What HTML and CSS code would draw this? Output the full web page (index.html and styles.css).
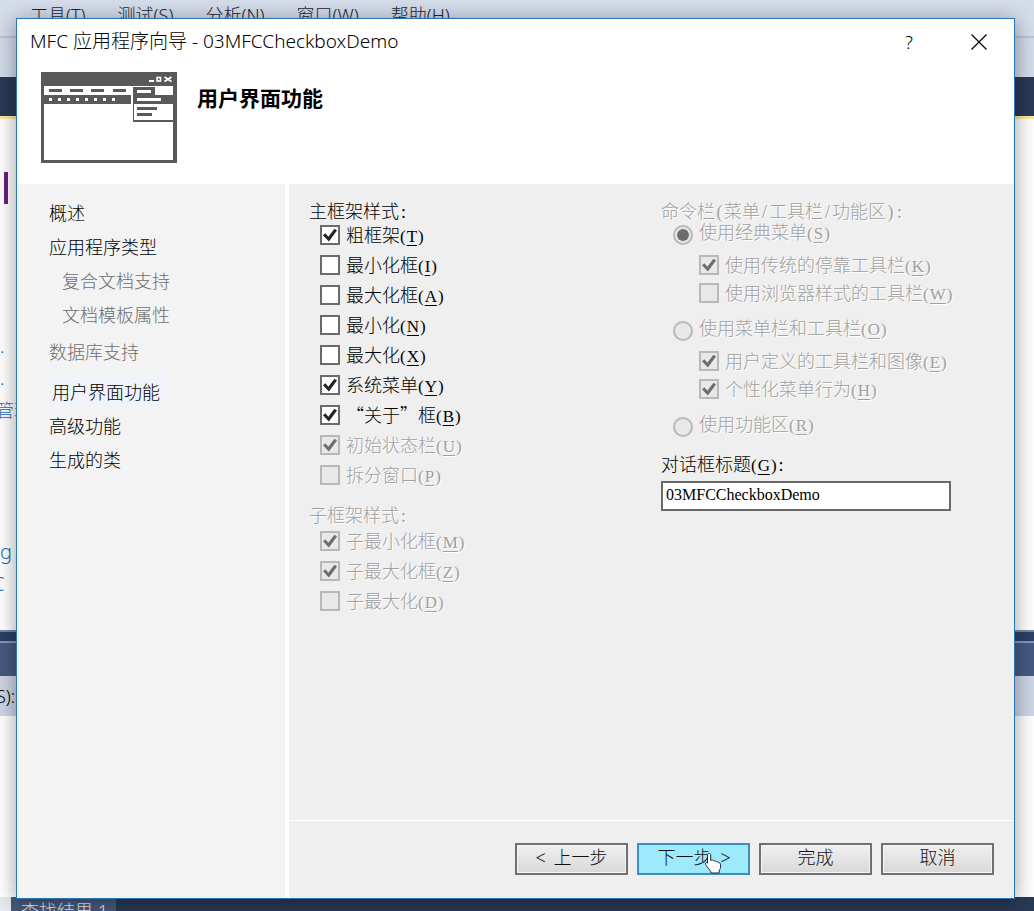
FILE: index.html
```html
<!DOCTYPE html>
<html lang="zh-CN">
  <head>
    <meta charset="utf-8">
    <title>MFC 应用程序向导</title>
    <link rel="stylesheet" href="styles.css">
  </head>

  <body>
  <!-- IDE behind the wizard -->
  <div class="ide">
    <div class="ide-menu">
      <span>工具(T)</span>
      <span>测试(S)</span>
      <span>分析(N)</span>
      <span>窗口(W)</span>
      <span>帮助(H)</span>
    </div>
    <div class="ide-toolbar"></div>
    <div class="ide-tabs"></div>
    <div class="ide-editor">
      <div class="caret"></div>
      <div class="ide-links">
        <span>.</span>
        <span>.</span>
        <span class="cut">管理</span>
      </div>
      <div class="ide-code">
        <span>g</span>
        <span class="cut">C</span>
      </div>
    </div>
    <div class="ide-splitter"></div>
    <div class="ide-panel-title"></div>
    <div class="ide-panel-bar"><span class="cut">S):</span></div>
    <div class="ide-panel"></div>
    <div class="ide-bottom"><span class="bottom-tab">查找结果 1</span></div>
  </div>

  <form class="dialog" onsubmit="return false">
    <div class="titlebar">
      <span class="title">MFC 应用程序向导 - 03MFCCheckboxDemo</span>
      <button type="button" class="caption help" aria-label="帮助">?</button>
      <button type="button" class="caption" aria-label="关闭">
        <svg width="16" height="16" viewBox="0 0 16 16"><path d="M.5 .5l15 15M15.5 .5l-15 15" stroke="#000" stroke-width="1.2"/></svg>
      </button>
    </div>

    <div class="header">
      <svg class="logo" width="136" height="91" viewBox="0 0 136 91">
        <rect width="136" height="91" fill="#58595b"/>
        <rect x="3" y="14" width="129" height="74" fill="#fff"/>
        <path d="M3 23h87v9H3z" fill="#58595b"/>
        <path d="M8 17h13v3H8zM29 17h13v3H29zM50 17h13v3H50zM72 17h13v3H72z" fill="#58595b"/>
        <path d="M8 26h3v3H8zM17 26h3v3h-3zM26 26h3v3h-3zM35 26h3v3h-3zM44 26h3v3h-3zM53 26h3v3h-3zM62 26h3v3h-3zM71 26h3v3h-3z" fill="#fff"/>
        <path d="M92 15h22v8h22v27H92z" fill="#58595b"/>
        <path d="M93 32h39v16H93z" fill="#fff"/>
        <path d="M96 18h14v3H96zM96 26h24v3H96zM108 8h5v2h-5z" fill="#fff"/>
        <path d="M96 35h20v3H96zM96 41h15v3H96z" fill="#58595b"/>
        <rect x="116" y="5.500" width="3.500" height="3.500" fill="none" stroke="#fff" stroke-width="1.600"/>
        <path d="M123.500 5l7 4.500M130.500 5l-7 4.500" stroke="#fff" stroke-width="2"/>
      </svg>
      <h1>用户界面功能</h1>
    </div>

    <div class="body">
      <ul class="steps">
        <li><a href="#">概述</a></li>
        <li><a href="#">应用程序类型</a></li>
        <li class="sub off">复合文档支持</li>
        <li class="sub off">文档模板属性</li>
        <li class="db off">数据库支持</li>
        <li><a href="#" class="current">用户界面功能</a></li>
        <li><a href="#">高级功能</a></li>
        <li><a href="#">生成的类</a></li>
      </ul>

      <div class="page">
        <div class="options">
          <div class="column">
            <fieldset>
              <legend>主框架样式<span class="half">:</span></legend>
              <label class="row"><input type="checkbox" checked><span>粗框架<span class="key">(<u>T</u>)</span></span></label>
              <label class="row"><input type="checkbox"><span>最小化框<span class="key">(<u>I</u>)</span></span></label>
              <label class="row"><input type="checkbox"><span>最大化框<span class="key">(<u>A</u>)</span></span></label>
              <label class="row"><input type="checkbox"><span>最小化<span class="key">(<u>N</u>)</span></span></label>
              <label class="row"><input type="checkbox"><span>最大化<span class="key">(<u>X</u>)</span></span></label>
              <label class="row"><input type="checkbox" checked><span>系统菜单<span class="key">(<u>Y</u>)</span></span></label>
              <label class="row"><input type="checkbox" checked><span>“关于”框<span class="key">(<u>B</u>)</span></span></label>
              <label class="row off"><input type="checkbox" checked disabled><span>初始状态栏<span class="key">(<u>U</u>)</span></span></label>
              <label class="row off"><input type="checkbox" disabled><span>拆分窗口<span class="key">(<u>P</u>)</span></span></label>
            </fieldset>
            <fieldset class="child off">
              <legend>子框架样式<span class="half">:</span></legend>
              <label class="row"><input type="checkbox" checked disabled><span>子最小化框<span class="key">(<u>M</u>)</span></span></label>
              <label class="row"><input type="checkbox" checked disabled><span>子最大化框<span class="key">(<u>Z</u>)</span></span></label>
              <label class="row"><input type="checkbox" disabled><span>子最大化<span class="key">(<u>D</u>)</span></span></label>
            </fieldset>
          </div>

          <div class="column">
            <fieldset class="off">
              <legend>命令栏<span class="half">(</span>菜单<span class="half">/</span>工具栏<span class="half">/</span>功能区<span class="half">)</span><span class="half">:</span></legend>
              <label class="row radio"><input type="radio" name="bars" checked disabled><span>使用经典菜单<span class="key">(<u>S</u>)</span></span></label>
              <div class="nested">
                <label class="row"><input type="checkbox" checked disabled><span>使用传统的停靠工具栏<span class="key">(<u>K</u>)</span></span></label>
                <label class="row"><input type="checkbox" disabled><span>使用浏览器样式的工具栏<span class="key">(<u>W</u>)</span></span></label>
              </div>
              <label class="row radio"><input type="radio" name="bars" disabled><span>使用菜单栏和工具栏<span class="key">(<u>O</u>)</span></span></label>
              <div class="nested">
                <label class="row"><input type="checkbox" checked disabled><span>用户定义的工具栏和图像<span class="key">(<u>E</u>)</span></span></label>
                <label class="row"><input type="checkbox" checked disabled><span>个性化菜单行为<span class="key">(<u>H</u>)</span></span></label>
              </div>
              <label class="row radio"><input type="radio" name="bars" disabled><span>使用功能区<span class="key">(<u>R</u>)</span></span></label>
            </fieldset>
            <label class="text-label" for="dlgTitle">对话框标题<span class="key">(<u>G</u>)</span><span class="half">:</span></label>
            <input type="text" id="dlgTitle" class="text" value="03MFCCheckboxDemo">
          </div>
        </div>

        <div class="buttons">
          <button type="button"><span class="half">&lt;</span><span class="half"> </span>上一步</button>
          <button type="button" class="hot">下一步<span class="half"> </span><span class="half">&gt;</span>
            <svg class="pointer" width="18" height="22" viewBox="0 0 18 22">
              <path d="M5 1.500c1 0 1.700.6 1.700 1.500V8.500l1-.4c.9-.2 1.700.1 2.100.9.900-.5 2-.2 2.400.7 1-.4 2.200 0 2.500 1.100 1-.1 1.800.5 1.800 1.500v3.200c0 1.500-1.500 2.500-1.500 5.500H7c0-2.500-2.500-4-4-6.500-1-1.700-2-2.500-1.500-3.500.5-.8 1.500-.6 2 .2V3c0-.9.600-1.500 1.500-1.500z" fill="#fff" stroke="#1c2b3c"/>
            </svg>
          </button>
          <button type="button">完成</button>
          <button type="button">取消</button>
        </div>
      </div>
    </div>
  </form>
  </body>
</html>
```
FILE: styles.css
```css
* {
  box-sizing: border-box;
}

body {
  margin: 0;
  position: relative;
  font-family: "Noto Sans", "Noto Sans CJK SC", sans-serif;
  font-size: 18px;
  font-weight: 300;
  color: #000;
}

/* IDE */
.ide {
  display: flex;
  flex-direction: column;
  min-height: 100vh;
  overflow: hidden;
  background: #fff;
}

.ide-menu {
  display: flex;
  gap: 32px;
  height: 38px;
  padding-left: 30px;
  line-height: 30px;
  background: #d5dcea;
  border-bottom: 2px solid #bcc4d4;
  color: #1b2436;
}

.ide-toolbar {
  height: 39px;
  background: #d3daea;
}

.ide-tabs {
  height: 42px;
  background: #293955;
  border-bottom: 3px solid #fbeaa0;
}

.ide-editor {
  flex: 1;
  color: #1a6fba;
}

.caret {
  width: 4px;
  height: 32px;
  margin: 53px 0 0 4px;
  background: #68217a;
}

.ide-links {
  display: grid;
  width: 40px;
  margin-top: 126px;
  line-height: 32px;
}

.ide-code {
  display: grid;
  width: 16px;
  margin-top: 110px;
  line-height: 32px;
  font-size: 20px;
}

.cut {
  margin-left: -4px;
}

.ide-code .cut {
  margin-left: -8px;
}

.ide-splitter {
  height: 13px;
  background: #2c4066;
  border-top: 2px solid #7786a5;
  border-bottom: 2px solid #8797b8;
}

.ide-panel-title {
  height: 33px;
  background: #465a82;
}

.ide-panel-bar {
  height: 40px;
  line-height: 40px;
  background: #ced5e5;
}

.ide-panel {
  height: 181px;
}

.ide-bottom {
  display: flex;
  height: 14px;
  padding-left: 11px;
  background: linear-gradient(90deg, #e8eaf0 11px, #293955 11px);
}

.bottom-tab {
  padding: 0 8px 0 10px;
  line-height: 28px;
  background: #46597d;
  color: #e6ecf6;
}

/* wizard window, lies over the IDE */
.dialog {
  position: absolute;
  top: 18px;
  right: 19px;
  bottom: 12px;
  left: 16px;
  display: flex;
  flex-direction: column;
  border: 1px solid #2a76b4;
  background: #fff;
  box-shadow: 0 3px 20px rgba(0, 0, 0, 0.4);
}

.titlebar {
  display: flex;
  align-items: center;
  height: 45px;
  padding-left: 13px;
}

.title {
  flex: 1;
  padding-bottom: 3px;
  font-size: 19px;
}

.caption {
  display: flex;
  align-items: center;
  justify-content: center;
  width: 70px;
  height: 45px;
  padding: 0;
  border: 0;
  background: none;
  font: inherit;
}

.header {
  display: flex;
  gap: 20px;
  height: 120px;
  padding: 8px 24px;
}

h1 {
  margin: 11px 0 0;
  font-size: 21px;
  line-height: 30px;
  font-weight: 700;
}

.body {
  display: flex;
  flex: 1;
  gap: 4px;
  font-family: "Noto Sans CJK SC", sans-serif;
}

.steps {
  width: 268px;
  margin: 0;
  padding: 11px 0 0 32px;
  list-style: none;
  line-height: 34px;
  background: #f3f3f3;
}

.steps a {
  color: #000;
  text-decoration: none;
}

.steps .off {
  color: #6d6d6d;
}

.steps .sub {
  padding-left: 13px;
}

.steps .db {
  margin: 3px 0 6px;
}

.steps .current {
  display: inline-block;
  margin-left: -2px;
  padding: 0 5px;
  background: #f0f4fa;
}

.page {
  display: flex;
  flex: 1;
  flex-direction: column;
  background: #efefef;
}

.options {
  display: grid;
  grid-template-columns: 352px 1fr;
  flex: 1;
  padding: 16px 20px 0;
}

fieldset {
  margin: 0;
  padding: 0;
  border: 0;
}

legend {
  height: 20px;
  padding: 0;
  line-height: 20px;
}

.child {
  margin-top: 14px;
}

.child legend {
  margin-bottom: 2px;
}

/* latin characters sit in half-width cells between the CJK ones */
.key,
.half {
  font-family: "Liberation Serif", serif;
  white-space: pre;
}

.key {
  font-size: 17px;
}

.half {
  display: inline-block;
  width: 9px;
  text-align: center;
}

u {
  margin: 0 1px;
  text-underline-offset: 3px;
}

.row {
  display: flex;
  align-items: center;
  height: 30px;
  padding-left: 11px;
  line-height: 24px;
}

.off {
  color: #a0a0a0;
  text-shadow: 1px 1px 0 #fff;
}

.steps .off {
  text-shadow: none;
}

.nested {
  padding: 1px 0 9px 27px;
}

.nested .row {
  height: 28px;
}

.radio {
  padding-left: 12px;
}

.radio > span {
  align-self: flex-start;
  line-height: 22px;
}

input[type=checkbox],
input[type=radio] {
  display: grid;
  place-content: center;
  flex: none;
  width: 20px;
  height: 20px;
  margin: 0 6px 0 0;
  border: 2px solid #6a6a6a;
  background: #fff;
  appearance: none;
}

input[type=radio] {
  border-radius: 50%;
}

input:disabled {
  border-color: #b8b8b8 !important;
  background: #e8e8e8 !important;
}

input[type=checkbox]:checked::before {
  content: "";
  width: 14px;
  height: 14px;
  background: #222;
  clip-path: polygon(0 52%, 17% 38%, 38% 62%, 82% 5%, 100% 18%, 42% 96%);
}

input[type=checkbox]:disabled::before {
  background: #6d6d6d !important;
}

input[type=radio]:checked::before {
  content: "";
  width: 12px;
  height: 12px;
  border-radius: 50%;
  background: #6d6d6d;
}

.text-label {
  display: block;
  height: 20px;
  margin: 11px 0 8px;
  line-height: 20px;
}

.text {
  display: block;
  width: 290px;
  height: 30px;
  padding: 0 3px 3px;
  border: 2px solid #6a6a6a;
  background: #fff;
  font-family: "Liberation Serif", serif;
  font-size: 16px;
}

.buttons {
  display: flex;
  justify-content: flex-end;
  gap: 9px;
  height: 78px;
  padding: 22px 20px 0;
  border-top: 1px solid #fff;
}

.buttons button {
  position: relative;
  width: 113px;
  height: 32px;
  padding: 0 0 6px;
  border: 2px solid #707070;
  background: linear-gradient(#f0f0f0, #d8d8d8);
  box-shadow: inset 0 0 0 1px #f4f4f4;
  font: inherit;
  line-height: 22px;
  color: #111;
}

.buttons .hot {
  border-color: #3c8fc0;
  background: #9deafd;
  box-shadow: none;
}

.pointer {
  position: absolute;
  top: 7px;
  left: 65px;
}
```
